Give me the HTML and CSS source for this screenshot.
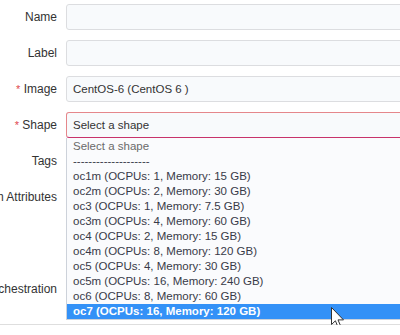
FILE: index.html
```html
<!DOCTYPE html>
<html lang="en">
<head>
  <meta charset="UTF-8" />
  <title>Create Instance</title>
  <link rel="stylesheet" href="styles.css">
</head>
<body>

  <form class="instance-form">
    <div class="row">
      <label class="row-label"><span>Name</span></label>
      <input class="field" type="text">
    </div>

    <div class="row">
      <label class="row-label"><span>Label</span></label>
      <input class="field" type="text">
    </div>

    <div class="row">
      <label class="row-label"><span><b class="req">*</b> Image</span></label>
      <div class="field">CentOS-6 (CentOS 6 )</div>
    </div>

    <div class="row">
      <label class="row-label"><span><b class="req">*</b> Shape</span></label>
      <div class="select-wrap">
        <div class="field field-error">Select a shape</div>
        <ul class="options">
          <li class="muted">Select a shape</li>
          <li>--------------------</li>
          <li>oc1m (OCPUs: 1, Memory: 15 GB)</li>
          <li>oc2m (OCPUs: 2, Memory: 30 GB)</li>
          <li>oc3 (OCPUs: 1, Memory: 7.5 GB)</li>
          <li>oc3m (OCPUs: 4, Memory: 60 GB)</li>
          <li>oc4 (OCPUs: 2, Memory: 15 GB)</li>
          <li>oc4m (OCPUs: 8, Memory: 120 GB)</li>
          <li>oc5 (OCPUs: 4, Memory: 30 GB)</li>
          <li>oc5m (OCPUs: 16, Memory: 240 GB)</li>
          <li>oc6 (OCPUs: 8, Memory: 60 GB)</li>
          <li class="selected">oc7 (OCPUs: 16, Memory: 120 GB)</li>
        </ul>
        <svg class="cursor" width="14" height="23" viewBox="0 0 14 23">
          <path d="M0.5 0.5 L0.5 17.5 L4.4 13.8 L7.2 20.5 L9.8 19.4 L7 12.9 L12.5 12.9 Z" fill="#fff" stroke="#333" stroke-width="1" stroke-linejoin="round"/>
        </svg>
      </div>
    </div>

    <div class="row">
      <label class="row-label"><span>Tags</span></label>
      <input class="field" type="text">
    </div>

    <div class="row row-top">
      <label class="row-label"><span>Custom Attributes</span></label>
      <textarea class="field field-area"></textarea>
    </div>

    <div class="row">
      <label class="row-label"><span>Orchestration</span></label>
      <input class="field" type="text">
    </div>
  </form>

  <hr class="divider">

</body>
</html>
```

FILE: styles.css
```css
body {
  font-family: "Liberation Sans", Arial, sans-serif;
  font-size: 12px;
  color: #333;
  background: #fff;
  margin: 0;
  padding-top: 4px;
  overflow: hidden;
}
.instance-form {
  width: 430px;
  display: flex;
  flex-direction: column;
  gap: 10px;
}
.row {
  display: grid;
  grid-template-columns: 57px 1fr;
  column-gap: 9px;
  align-items: center;
}
.row-top {
  align-items: start;
}
.row-top .row-label {
  height: 26px;
}
.row-label {
  display: flex;
  justify-content: flex-end;
  align-items: center;
  white-space: nowrap;
  color: #333;
}
.req {
  color: #e0484e;
  font-weight: normal;
  font-size: 11px;
}
.field {
  box-sizing: border-box;
  height: 26px;
  width: 100%;
  margin: 0;
  padding: 0 6px;
  border: 1px solid #dcdde0;
  border-radius: 3px;
  background: #f8fafc;
  font: inherit;
  font-size: 11.5px;
  color: #333;
  display: flex;
  align-items: center;
}
.field-area {
  height: 82px;
  resize: none;
}
.field-error {
  border-color: #e5878b;
  border-bottom-color: #c8336b;
}
.select-wrap {
  position: relative;
}
.options {
  position: absolute;
  top: 100%;
  left: 0;
  right: 0;
  margin: 0;
  padding: 1px 0 0;
  list-style: none;
  background: #fafbfd;
  border: 1px solid #cdd2da;
  border-top: none;
  z-index: 2;
}
.options li {
  height: 15px;
  line-height: 15px;
  padding-left: 6px;
  font-size: 11.5px;
  color: #383a48;
  white-space: nowrap;
}
.options .muted {
  color: #6a6a6a;
}
.options .selected {
  background: #3391f7;
  color: #fff;
  font-weight: bold;
}
.cursor {
  position: absolute;
  left: 265px;
  top: 195px;
  z-index: 3;
}
.divider {
  border: none;
  border-top: 1px solid #dedede;
  margin: 22px 0 0;
}
```
